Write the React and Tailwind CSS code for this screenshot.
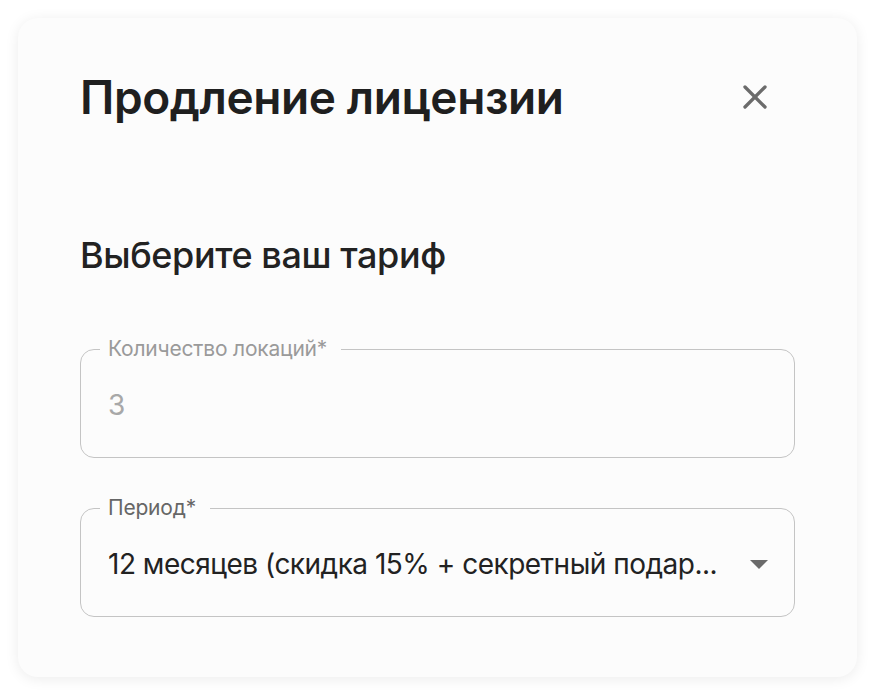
import { X } from "lucide-react";

function OutlinedField({ label, labelColor, children }) {
  return (
    <fieldset className="h-[120px] min-w-0 rounded-[14px] border-[1.5px] border-[#c4c4c4] pl-[19px] pr-[26px]">
      <legend className={`pl-[8px] pr-[14px] text-[21px] leading-[22px] tracking-[-0.2px] ${labelColor}`}>{label}</legend>
      <div className="mt-[30px] flex items-center pl-[8px]">{children}</div>
    </fieldset>
  );
}

export default function App() {
  return (
    <div className="min-h-[700px] bg-white p-[18px] font-['Inter','Liberation_Sans',sans-serif]">
      <div className="w-[839px] rounded-[20px] bg-[#fcfcfc] px-[62px] pt-[55px] pb-[60px] shadow-[0_2px_14px_rgba(0,0,0,0.08)]">
        <div className="flex items-center justify-between">
          <h1 className="text-[46px] font-semibold leading-[48px] tracking-[-0.4px] text-[#1f1f1f]">
            Продление лицензии
          </h1>
          <button type="button" className="mr-[20px] flex h-10 w-10 items-center justify-center text-[#6b6b6b]" aria-label="Закрыть">
            <X size={40} strokeWidth={2} />
          </button>
        </div>

        <h2 className="mt-[114px] text-[36px] font-medium leading-[40px] tracking-[-0.4px] text-[#222]">
          Выберите ваш тариф
        </h2>

        <div className="mt-[63px] flex flex-col gap-[39px]">
          <OutlinedField label="Количество локаций*" labelColor="text-[#9a9a9a]">
            <span className="text-[28px] leading-[30px] text-[#a8a8a8]">3</span>
          </OutlinedField>

          <OutlinedField label="Период*" labelColor="text-[#666]">
            <span className="min-w-0 flex-1 whitespace-nowrap text-[28px] leading-[30px] tracking-[-0.5px] text-[#222]">
              12 месяцев (скидка 15% + секретный подар...
            </span>
            <svg width="18" height="9" viewBox="0 0 18 9" className="shrink-0" aria-hidden="true">
              <path d="M0 0h18L9 9z" fill="#6a6a6a" />
            </svg>
          </OutlinedField>
        </div>
      </div>
    </div>
  );
}
